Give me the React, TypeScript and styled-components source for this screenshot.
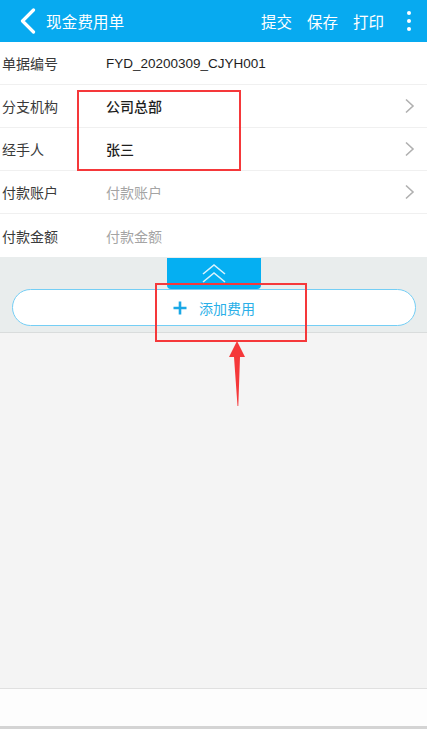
import React from "react";
import styled, { createGlobalStyle } from "styled-components";

const Global = createGlobalStyle`
  html, body { margin: 0; padding: 0; background: #ffffff; }
  body { font-family: "Noto Sans CJK SC", "Noto Sans", Roboto, sans-serif; }
  * { box-sizing: border-box; }
`;

const Page = styled.div`
  position: relative;
  width: 427px;
  height: 729px;
  display: flex;
  flex-direction: column;
  background: #ffffff;
  overflow: hidden;
`;

const Header = styled.header`
  height: 42px;
  flex: none;
  background: #07aaf0;
  display: flex;
  align-items: center;
  padding: 0 12px 0 19px;
  color: #ffffff;
`;

const BackBtn = styled.div`
  width: 18px;
  height: 26px;
  display: flex;
  align-items: center;
  margin-right: 9px;
`;

const Title = styled.div`
  font-size: 15.5px;
  flex: 1;
  letter-spacing: 0.2px;
`;

const Actions = styled.div`
  display: flex;
  align-items: center;
  gap: 15px;
`;

const Action = styled.span`
  font-size: 15.5px;
`;

const MoreBtn = styled.div`
  display: flex;
  flex-direction: column;
  gap: 4px;
  margin-left: 23px;
  margin-right: 4px;
`;

const Dot = styled.span`
  width: 4px;
  height: 4px;
  border-radius: 50%;
  background: #ffffff;
`;

const Form = styled.div`
  flex: none;
  display: flex;
  flex-direction: column;
`;

const Row = styled.div`
  height: 43px;
  display: flex;
  align-items: center;
  padding: 0 12px 0 2px;
  border-bottom: 1.5px solid #f0f0f0;
  &:last-child { border-bottom: none; }
`;

const Label = styled.div`
  width: 104px;
  font-size: 14px;
  color: #3a3a3a;
`;

const Value = styled.div<{ $placeholder?: boolean; $latin?: boolean }>`
  flex: 1;
  font-size: ${(p) => (p.$latin ? "13.5px" : "14px")};
  color: ${(p) => (p.$placeholder ? "#a4a4a4" : "#1e1e1e")};
  font-weight: ${(p) => (p.$placeholder ? 400 : 500)};
  font-family: ${(p) =>
    p.$latin
      ? `"Liberation Sans", Arial, sans-serif`
      : `"Noto Sans CJK SC", sans-serif`};
`;

const Toolbar = styled.div`
  flex: none;
  height: 76px;
  background: #e9eded;
  border-bottom: 1.5px solid #d9dcdc;
  display: flex;
  flex-direction: column;
  align-items: center;
  padding-top: 1px;
`;

const CollapseTab = styled.div`
  width: 94px;
  height: 31px;
  background: #05aff2;
  border-radius: 0 0 4px 4px;
  display: flex;
  align-items: center;
  justify-content: center;
`;

const AddButton = styled.div`
  width: 404px;
  height: 37px;
  background: #ffffff;
  border: 1.8px solid #74cef5;
  border-radius: 19px;
  display: flex;
  align-items: center;
  justify-content: center;
  gap: 12px;
  color: #2aafe8;
  font-size: 14px;
  padding-left: 1px;
`;

const Content = styled.div`
  flex: 1;
  background: #f4f4f4;
  border-bottom: 1.5px solid #e0e0e0;
`;

const Footer = styled.div`
  flex: none;
  height: 40px;
  background: #fdfdfd;
  border-bottom: 3px solid #d4d4d4;
`;

const RedBox = styled.div<{ $x: number; $y: number; $w: number; $h: number }>`
  position: absolute;
  left: ${(p) => p.$x}px;
  top: ${(p) => p.$y}px;
  width: ${(p) => p.$w}px;
  height: ${(p) => p.$h}px;
  border: 2.5px solid #f5383a;
  pointer-events: none;
`;

const Arrow = styled.svg`
  position: absolute;
  left: 226px;
  top: 340px;
`;

const Chevron = () => (
  <svg width="11" height="16" viewBox="0 0 11 16">
    <path d="M2 1.5 L9 8 L2 14.5" fill="none" stroke="#b0b0b0" strokeWidth="1.6" />
  </svg>
);

const rows = [
  { label: "单据编号", value: "FYD_20200309_CJYH001", latin: true },
  { label: "分支机构", value: "公司总部", arrow: true },
  { label: "经手人", value: "张三", arrow: true },
  { label: "付款账户", value: "付款账户", placeholder: true, arrow: true },
  { label: "付款金额", value: "付款金额", placeholder: true },
];

export default function App() {
  return (
    <>
      <Global />
      <Page>
        <Header>
          <BackBtn>
            <svg width="17" height="26" viewBox="0 0 17 26">
              <path d="M14.5 2 L3.5 13 L14.5 24" fill="none" stroke="#ffffff" strokeWidth="3.2" strokeLinecap="round" strokeLinejoin="round" />
            </svg>
          </BackBtn>
          <Title>现金费用单</Title>
          <Actions>
            <Action>提交</Action>
            <Action>保存</Action>
            <Action>打印</Action>
          </Actions>
          <MoreBtn>
            <Dot />
            <Dot />
            <Dot />
          </MoreBtn>
        </Header>
        <Form>
          {rows.map((r) => (
            <Row key={r.label}>
              <Label>{r.label}</Label>
              <Value $placeholder={r.placeholder} $latin={r.latin}>{r.value}</Value>
              {r.arrow && <Chevron />}
            </Row>
          ))}
        </Form>
        <Toolbar>
          <CollapseTab>
            <svg width="28" height="22" viewBox="0 0 28 22">
              <path d="M3 11 L14 2 L25 11" fill="none" stroke="#ffffff" strokeOpacity="0.85" strokeWidth="1.6" />
              <path d="M3 19 L14 10 L25 19" fill="none" stroke="#ffffff" strokeOpacity="0.85" strokeWidth="1.6" />
            </svg>
          </CollapseTab>
          <AddButton>
            <svg width="14" height="14" viewBox="0 0 14 14">
              <path d="M7 0.5 V13.5 M0.5 7 H13.5" stroke="#1aa8e6" strokeWidth="2.6" />
            </svg>
            <span>添加费用</span>
          </AddButton>
        </Toolbar>
        <Content />
        <Footer />
        <RedBox $x={77} $y={90} $w={164} $h={81} />
        <RedBox $x={155} $y={283} $w={152} $h={59} />
        <Arrow width="22" height="70" viewBox="0 0 22 70">
          <path d="M11 1 L19 17 L14 17 L12.3 66 L11.5 66 L8 17 L3 17 Z" fill="#f5383a" />
        </Arrow>
      </Page>
    </>
  );
}
